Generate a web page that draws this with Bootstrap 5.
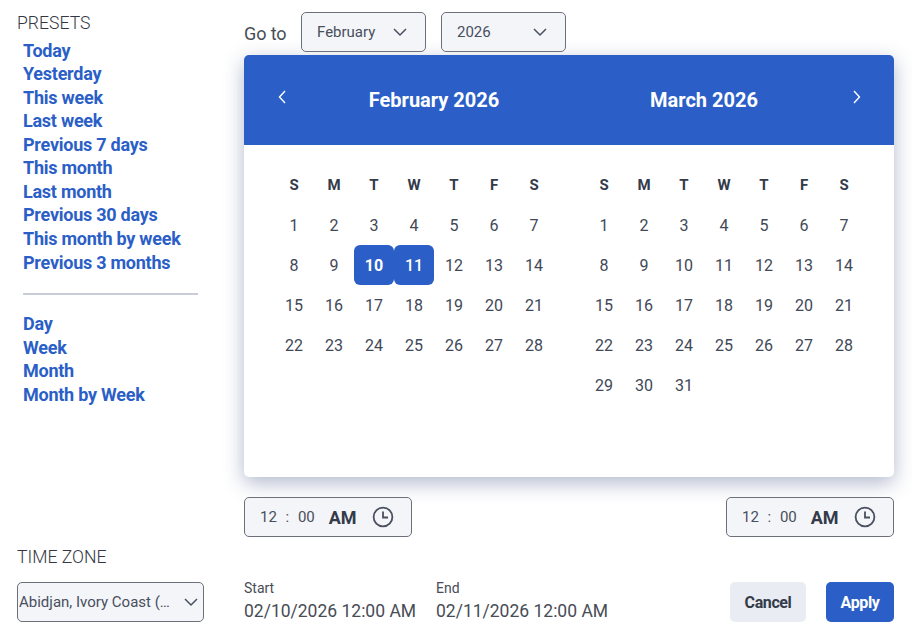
<!DOCTYPE html>
<html lang="en">
<head>
  <meta charset="UTF-8">
  <title>Date range picker</title>
  <meta name="viewport" content="width=device-width, initial-scale=1">
  <link rel="stylesheet" href="https://cdn.jsdelivr.net/npm/bootstrap@5.3.0/dist/css/bootstrap.min.css">
  <style>
    html, body { height: 100%; }
    body { font-family: Roboto, "Liberation Sans", sans-serif; color: #343b4a; background: #fff; overflow: hidden; }
    .picker { width: 912px; height: 636px; }
    .side { width: 244px; padding: 13px 0 14px 17px; }
    .side-title { font-size: 17.6px; line-height: 20px; font-weight: 300; color: #33373f; }
    .preset-list { margin: 5.5px 0 0 6px; font-size: 18px; line-height: 23.56px; font-weight: 700; letter-spacing: -.25px; }
    .preset-list a { color: #2b5fc7; text-decoration: none; }
    .preset-sep { width: 175px; margin: 18.5px 0 17.5px 6px; border: 0; border-top: 2px solid #c9cdd5; opacity: 1; }
    .main-col { width: 650px; padding-top: 12px; }
    .goto-row { height: 40px; }
    .goto-label { width: 57px; font-size: 18px; letter-spacing: -.1px; color: #484c55; padding-top: 2px; }
    .pick-select { height: 40px; font-size: 15px; color: #484f5e; background-color: #f4f5f8; border: 1px solid #6c707a; border-radius: 5px; padding: 0 30px 0 15px; background-image: url("data:image/svg+xml,%3csvg xmlns='http://www.w3.org/2000/svg' viewBox='0 0 16 16'%3e%3cpath fill='none' stroke='%23484f5e' stroke-width='1.5' d='M2 5 8 11l6-6'/%3e%3c/svg%3e"); background-position: right 17px center; background-size: 16px 16px; }
    .sel-month, .sel-year { width: 125px; }
    .sel-month { margin-right: 15px; }
    .sel-zone { width: 187px; padding: 0 20px 0 1px; background-position: right 4px center; margin-top: 15px; }
    .cal { height: 422px; margin-top: 3px; border-radius: 5px; box-shadow: 0 6px 20px rgba(52, 72, 125, .38); background: #fff; }
    .cal-head { height: 90px; background: #2b5fc7; color: #fff; border-radius: 5px 5px 0 0; }
    .cal-arrow { width: 55px; height: 84px; margin-top: -6px; border: 0; background: none; color: #fff; padding: 0; }
    .cal-title { width: 270px; text-align: center; font-size: 20px; font-weight: 700; }
    .cal-body { padding: 20px 30px; gap: 30px; }
    .month-grid { display: grid; grid-template-columns: repeat(7, 40px); grid-auto-rows: 40px; width: 280px; }
    .month-grid > div { display: flex; align-items: center; justify-content: center; padding-top: 1px; font-size: 16px; color: #414857; }
    .month-grid > .dow { padding-top: 0; font-size: 15px; font-weight: 700; color: #343b4a; }
    .month-grid > .picked { background: #2b5fc7; color: #fff; border-radius: 6px; }
    .time-row { margin-top: 20px; }
    .time-box { width: 168px; height: 40px; background: #f4f5f8; border: 1px solid #6c707a; border-radius: 5px; padding-left: 15px; font-size: 15px; color: #484f5e; }
    .time-sep { width: 21px; text-align: center; }
    .time-ampm { margin-left: 14px; margin-right: 15px; font-size: 18px; font-weight: 700; color: #343b4a; }
    .foot-row { margin-top: 45px; height: 40px; }
    .range-col { width: 192px; }
    .range-label { font-size: 14px; line-height: 16px; color: #484c55; margin-top: -2px; }
    .range-value { font-size: 17.5px; line-height: 22px; margin-top: 4px; color: #484c55; }
    .btn-cancel, .btn-apply { height: 40px; padding: 1px 0 0; font-size: 16px; font-weight: 700; border: 0; border-radius: 5px; letter-spacing: -.4px; }
    .btn-cancel { width: 76px; margin-right: 20px; background: #e9ecf2; color: #343b4a; }
    .btn-apply { width: 68px; background: #2b5fc7; color: #fff; }
  </style>
</head>
<body>
  <div class="picker d-flex">
    <!-- Presets and time zone -->
    <div class="side d-flex flex-column justify-content-between">
      <div>
        <div class="side-title">PRESETS</div>
        <ul class="preset-list list-unstyled mb-0">
          <li><a href="#">Today</a></li>
          <li><a href="#">Yesterday</a></li>
          <li><a href="#">This week</a></li>
          <li><a href="#">Last week</a></li>
          <li><a href="#">Previous 7 days</a></li>
          <li><a href="#">This month</a></li>
          <li><a href="#">Last month</a></li>
          <li><a href="#">Previous 30 days</a></li>
          <li><a href="#">This month by week</a></li>
          <li><a href="#">Previous 3 months</a></li>
        </ul>
        <hr class="preset-sep">
        <ul class="preset-list list-unstyled mt-0 mb-0">
          <li><a href="#">Day</a></li>
          <li><a href="#">Week</a></li>
          <li><a href="#">Month</a></li>
          <li><a href="#">Month by Week</a></li>
        </ul>
      </div>
      <div>
        <div class="side-title">TIME ZONE</div>
        <select class="form-select pick-select sel-zone"><option>Abidjan, Ivory Coast (…</option></select>
      </div>
    </div>

    <!-- Calendar -->
    <div class="main-col">
      <div class="goto-row d-flex align-items-center">
        <div class="goto-label">Go to</div>
        <select class="form-select pick-select sel-month"><option>February</option></select>
        <select class="form-select pick-select sel-year"><option>2026</option></select>
      </div>

      <div class="cal">
        <div class="cal-head d-flex align-items-center">
          <button class="cal-arrow d-flex align-items-center justify-content-start" aria-label="Previous month">
            <svg width="10" height="14" viewBox="0 0 10 14" style="margin-left:33px"><path d="M8 1 2.5 7 8 13" fill="none" stroke="#fff" stroke-width="1.4"/></svg>
          </button>
          <div class="cal-title">February 2026</div>
          <div class="cal-title">March 2026</div>
          <button class="cal-arrow d-flex align-items-center justify-content-end" aria-label="Next month">
            <svg width="10" height="14" viewBox="0 0 10 14" style="margin-right:32px"><path d="M2 1 7.5 7 2 13" fill="none" stroke="#fff" stroke-width="1.4"/></svg>
          </button>
        </div>
        <div class="cal-body d-flex">
          <div class="month-grid" id="feb"></div>
          <div class="month-grid" id="mar"></div>
        </div>
      </div>

      <div class="time-row d-flex justify-content-between">
        <div class="time-box d-flex align-items-center">
          <span>12</span><span class="time-sep">:</span><span>00</span><span class="time-ampm">AM</span>
          <svg width="22" height="22" viewBox="0 0 22 22"><circle cx="11" cy="11" r="9.4" fill="none" stroke="#484f5e" stroke-width="1.8"/><path d="M11 5.5V11.5H16" fill="none" stroke="#484f5e" stroke-width="1.8"/></svg>
        </div>
        <div class="time-box d-flex align-items-center">
          <span>12</span><span class="time-sep">:</span><span>00</span><span class="time-ampm">AM</span>
          <svg width="22" height="22" viewBox="0 0 22 22"><circle cx="11" cy="11" r="9.4" fill="none" stroke="#484f5e" stroke-width="1.8"/><path d="M11 5.5V11.5H16" fill="none" stroke="#484f5e" stroke-width="1.8"/></svg>
        </div>
      </div>

      <div class="foot-row d-flex align-items-start">
        <div class="range-col">
          <div class="range-label">Start</div>
          <div class="range-value">02/10/2026 12:00 AM</div>
        </div>
        <div class="range-col">
          <div class="range-label">End</div>
          <div class="range-value">02/11/2026 12:00 AM</div>
        </div>
        <button class="btn btn-cancel ms-auto">Cancel</button>
        <button class="btn btn-apply">Apply</button>
      </div>
    </div>
  </div>

  <script src="https://cdn.jsdelivr.net/npm/bootstrap@5.3.0/dist/js/bootstrap.bundle.min.js"></script>
  <script>
    // Fill one month grid, first day always falls on Sunday in these two months
    function fillMonth(id, days, picked) {
      let html = "";
      ["S", "M", "T", "W", "T", "F", "S"].forEach(d => { html += `<div class="dow">${d}</div>`; });
      for (let d = 1; d <= days; d++) {
        let cls = "";
        let style = "";
        if (picked.includes(d)) {
          cls = "picked";
          style = ` style="font-weight:${d === picked[0] ? 700 : 500}"`;
        }
        html += `<div class="${cls}"${style}>${d}</div>`;
      }
      document.getElementById(id).innerHTML = html;
    }
    fillMonth("feb", 28, [10, 11]);
    fillMonth("mar", 31, []);
  </script>
</body>
</html>
